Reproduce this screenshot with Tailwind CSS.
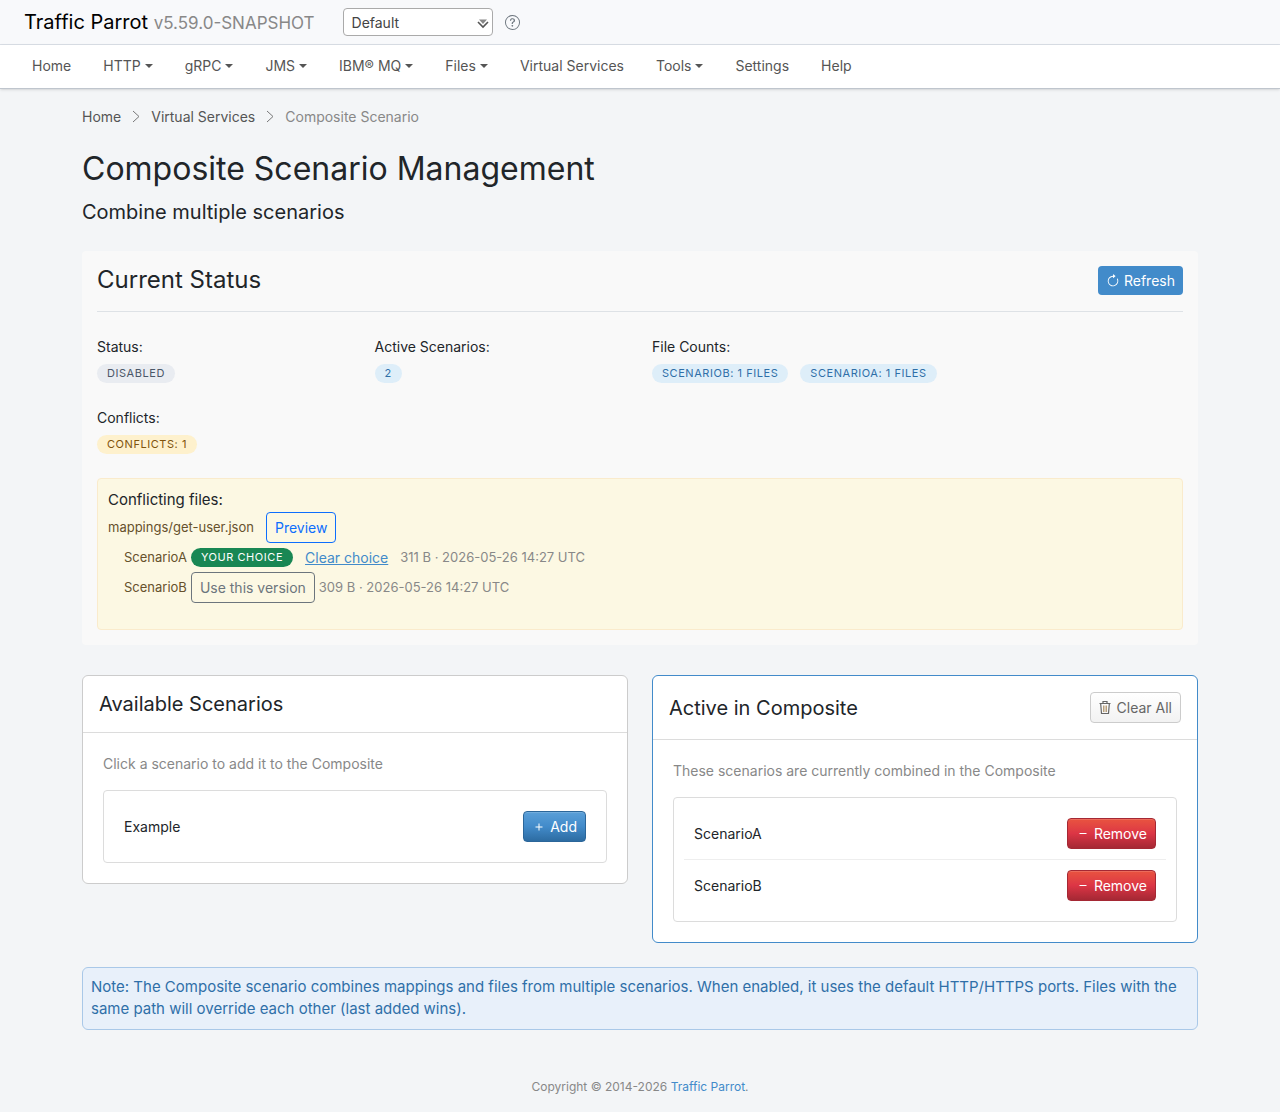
<!DOCTYPE html>
<html lang="en">
<head>
    <meta charset="UTF-8">
    <meta name="viewport" content="width=device-width, initial-scale=1.0">
    <title>Composite Scenario Management - Traffic Parrot</title>
    <script src="https://cdn.jsdelivr.net/npm/@tailwindcss/browser@4"></script>
</head>
<body class="min-h-screen bg-[#f3f5f7] font-['Inter',sans-serif] text-sm text-[#212529]">
    <header class="flex h-[45px] items-center border-b border-[#dadfe6] bg-[#f8f9fb] px-6">
        <a href="#" class="text-[20px] leading-6 text-black">Traffic Parrot <span class="text-[17px] text-[#888]">v5.59.0-SNAPSHOT</span></a>
        <div class="relative ml-7">
            <select id="scenario" aria-label="Scenario" class="block h-7 w-[150px] appearance-none rounded border border-[#aaa] bg-white px-2 pt-0.5 text-sm text-[#444]">
                <option>Default</option>
                <option>Composite</option>
            </select>
            <svg class="pointer-events-none absolute right-1 top-2.5 h-3 w-3" viewBox="0 0 12 12">
                <path d="M2 1.5h8L6 6z" fill="#888"/>
                <path d="M1 4l5 5 5-5" fill="none" stroke="#555" stroke-width="1.6"/>
            </svg>
        </div>
        <button type="button" aria-label="Help" class="ml-3 text-[#6c757d]">
            <svg class="h-[15px] w-[15px]" viewBox="0 0 16 16" fill="currentColor">
                <path d="M8 15A7 7 0 1 1 8 1a7 7 0 0 1 0 14m0 1A8 8 0 1 0 8 0a8 8 0 0 0 0 16"/>
                <path d="M5.255 5.786a.237.237 0 0 0 .241.247h.825c.138 0 .248-.113.266-.25.09-.656.54-1.134 1.342-1.134.686 0 1.314.343 1.314 1.168 0 .635-.374.927-.965 1.371-.673.489-1.206 1.06-1.168 1.987l.003.217a.25.25 0 0 0 .25.246h.811a.25.25 0 0 0 .25-.25v-.105c0-.718.273-.927 1.01-1.486.609-.463 1.244-.977 1.244-2.056 0-1.511-1.276-2.241-2.673-2.241-1.267 0-2.655.59-2.75 2.286m1.557 5.763c0 .533.425.927 1.01.927.609 0 1.028-.394 1.028-.927 0-.552-.42-.94-1.029-.94-.584 0-1.009.388-1.009.94"/>
            </svg>
        </button>
    </header>

    <nav class="flex h-11 items-center gap-8 border-b border-[#bfc5cd] bg-white px-8 pb-0.5 text-[#555] shadow-sm">
        <a href="#">Home</a>
        <a href="#" class="flex items-center gap-1">HTTP <span class="border-x-4 border-t-4 border-x-transparent border-t-[#555]"></span></a>
        <a href="#" class="flex items-center gap-1">gRPC <span class="border-x-4 border-t-4 border-x-transparent border-t-[#555]"></span></a>
        <a href="#" class="flex items-center gap-1">JMS <span class="border-x-4 border-t-4 border-x-transparent border-t-[#555]"></span></a>
        <a href="#" class="flex items-center gap-1">IBM® MQ <span class="border-x-4 border-t-4 border-x-transparent border-t-[#555]"></span></a>
        <a href="#" class="flex items-center gap-1">Files <span class="border-x-4 border-t-4 border-x-transparent border-t-[#555]"></span></a>
        <a href="#">Virtual Services</a>
        <a href="#" class="flex items-center gap-1">Tools <span class="border-x-4 border-t-4 border-x-transparent border-t-[#555]"></span></a>
        <a href="#">Settings</a>
        <a href="#">Help</a>
    </nav>

    <main class="mx-auto max-w-[1140px] px-3 pt-[18px]">
        <nav aria-label="Breadcrumb" class="flex items-center gap-2.5 text-[#555]">
            <a href="#">Home</a>
            <svg class="h-3.5 w-2.5" viewBox="0 0 10 14" fill="none" stroke="#777"><path d="M2 1l6 5.500-6 5.500"/></svg>
            <a href="#">Virtual Services</a>
            <svg class="h-3.5 w-2.5" viewBox="0 0 10 14" fill="none" stroke="#777"><path d="M2 1l6 5.500-6 5.500"/></svg>
            <span class="text-[#888]">Composite Scenario</span>
        </nav>

        <h1 class="mt-[23px] text-[32px] leading-[38px]">Composite Scenario Management</h1>
        <h2 class="mt-3 text-[20px] leading-6">Combine multiple scenarios</h2>

        <section class="mt-[27px] rounded bg-[#f9f9f9] p-[15px]">
            <div class="flex items-start justify-between border-b border-[#dee2e6] pb-4">
                <h3 class="text-[24px] leading-7">Current Status</h3>
                <button type="button" class="flex h-[29px] items-center gap-1 rounded bg-[#428bca] px-2 text-white">
                    <svg class="h-3.5 w-3.5" viewBox="0 0 16 16" fill="currentColor">
                        <path fill-rule="evenodd" d="M8 3a5 5 0 1 0 4.546 2.914.5.5 0 0 1 .908-.417A6 6 0 1 1 8 2z"/>
                        <path d="M8 4.466V.534a.25.25 0 0 1 .41-.192l2.36 1.966c.12.1.12.284 0 .384L8.41 4.658A.25.25 0 0 1 8 4.466"/>
                    </svg>
                    Refresh
                </button>
            </div>

            <div class="mt-6 grid grid-cols-4 gap-6">
                <div>
                    <div class="leading-[22px]">Status:</div>
                    <div class="mt-[6px] flex"><span class="rounded-full bg-[#e9ecf1] px-2.5 text-[11px] leading-[19px] tracking-wider text-[#4b5768]">DISABLED</span></div>
                </div>
                <div>
                    <div class="leading-[22px]">Active Scenarios:</div>
                    <div class="mt-[6px] flex"><span class="rounded-full bg-[#deeef9] px-2.5 text-[11px] leading-[19px] tracking-wider text-[#2f6fa8]">2</span></div>
                </div>
                <div class="col-span-2">
                    <div class="leading-[22px]">File Counts:</div>
                    <div class="mt-[6px] flex gap-3">
                        <span class="rounded-full bg-[#deeef9] px-2.5 text-[11px] leading-[19px] tracking-wider text-[#2f6fa8]">SCENARIOB: 1 FILES</span>
                        <span class="rounded-full bg-[#deeef9] px-2.5 text-[11px] leading-[19px] tracking-wider text-[#2f6fa8]">SCENARIOA: 1 FILES</span>
                    </div>
                </div>
                <div>
                    <div class="leading-[22px]">Conflicts:</div>
                    <div class="mt-[6px] flex"><span class="rounded-full bg-[#fef1cd] px-2.5 text-[11px] leading-[19px] tracking-wider text-[#7f530b]">CONFLICTS: 1</span></div>
                </div>
            </div>

            <div class="mt-6 rounded border border-[#faebcc] bg-[#fcf8e3] px-2.5 pt-2.5 pb-[26px] text-[13px] text-[#66512c]">
                <div class="text-[15px] leading-[22px] text-[#212529]">Conflicting files:</div>
                <div class="mt-px flex h-[31px] items-center gap-3">
                    <span>mappings/get-user.json</span>
                    <button type="button" class="h-[31px] rounded border border-[#0d6efd] px-2 text-sm text-[#0d6efd]">Preview</button>
                </div>
                <ul class="pl-4">
                    <li class="flex h-[29px] items-center">
                        <span>ScenarioA</span>
                        <span class="ml-1 rounded-full bg-[#198754] px-2.5 text-[11px] leading-[19px] tracking-wider text-white">YOUR CHOICE</span>
                        <button type="button" class="ml-3 text-sm text-[#428bca] underline">Clear choice</button>
                        <span class="ml-3 text-[#888]">311 B · 2026-05-26 14:27 UTC</span>
                    </li>
                    <li class="flex h-[31px] items-center gap-1">
                        <span>ScenarioB</span>
                        <button type="button" class="h-[31px] rounded border border-[#6c757d] px-2 text-sm text-[#6c757d]">Use this version</button>
                        <span class="text-[#888]">309 B · 2026-05-26 14:27 UTC</span>
                    </li>
                </ul>
            </div>
        </section>

        <div class="mt-[30px] grid grid-cols-2 items-start gap-6">
            <section class="rounded-md border border-[#ccc] bg-white">
                <div class="border-b border-[#dcdcdc] p-4">
                    <h3 class="text-[20px] leading-6">Available Scenarios</h3>
                </div>
                <div class="p-5">
                    <p class="leading-[22px] text-[#888]">Click a scenario to add it to the Composite</p>
                    <ul class="mt-[15px] rounded border border-[#dcdcdc] p-2.5">
                        <li class="flex items-center justify-between p-2.5">
                            <span>Example</span>
                            <button type="button" class="flex h-[31px] items-center gap-1 rounded border border-[#2b669a] bg-linear-to-b from-[#5a9fd8] via-[#428bca] to-[#2d6ca2] px-2 text-white inset-shadow-[0_1px_0_#ffffff26]">
                                <svg class="h-3.5 w-3.5" viewBox="0 0 14 14" fill="none" stroke="currentColor"><path d="M7 3.5v7M3.5 7h7"/></svg>
                                Add
                            </button>
                        </li>
                    </ul>
                </div>
            </section>

            <section class="rounded-md border border-[#428bca] bg-white">
                <div class="flex items-center justify-between border-b border-[#dcdcdc] p-4">
                    <h3 class="text-[20px] leading-6">Active in Composite</h3>
                    <button type="button" class="flex h-[31px] items-center gap-1 rounded border border-[#ccc] bg-linear-to-b from-white to-[#f2f2f2] px-2 text-[#666]">
                        <svg class="h-3.5 w-3.5" viewBox="0 0 14 14" fill="none" stroke="#666">
                            <path d="M.5 2.500h11M4 2V.500h4V2M1.700 3l.8 9.500h7l.8-9.500" stroke-width="1.200"/>
                            <path d="M4.500 4.500v6.500M6 4.500v6.500M7.500 4.500v6.500" stroke="#a8895c" stroke-width=".8"/>
                        </svg>
                        Clear All
                    </button>
                </div>
                <div class="p-5">
                    <p class="leading-[22px] text-[#888]">These scenarios are currently combined in the Composite</p>
                    <ul class="mt-[15px] divide-y divide-[#eee] rounded border border-[#dcdcdc] p-2.5">
                        <li class="flex items-center justify-between p-2.5">
                            <span>ScenarioA</span>
                            <button type="button" class="flex h-[31px] items-center gap-1 rounded border border-[#a52834] bg-linear-to-b from-[#e9533f] via-[#dc3545] to-[#a52834] px-2 text-white inset-shadow-[0_1px_0_#ffffff26]">
                                <svg class="h-3.5 w-3.5" viewBox="0 0 14 14" fill="none" stroke="currentColor"><path d="M3.500 6.500h7"/></svg>
                                Remove
                            </button>
                        </li>
                        <li class="flex items-center justify-between p-2.5">
                            <span>ScenarioB</span>
                            <button type="button" class="flex h-[31px] items-center gap-1 rounded border border-[#a52834] bg-linear-to-b from-[#e9533f] via-[#dc3545] to-[#a52834] px-2 text-white inset-shadow-[0_1px_0_#ffffff26]">
                                <svg class="h-3.5 w-3.5" viewBox="0 0 14 14" fill="none" stroke="currentColor"><path d="M3.500 6.500h7"/></svg>
                                Remove
                            </button>
                        </li>
                    </ul>
                </div>
            </section>
        </div>

        <div class="mt-6 rounded-md border border-[#a9c8e8] bg-[#e8f0fa] px-2 pt-2 pb-[9px] text-[15px] leading-[22px] text-[#2f6fa8]">
            Note: The Composite scenario combines mappings and files from multiple scenarios. When enabled, it uses the default HTTP/HTTPS ports. Files with the same path will override each other (last added wins).
        </div>
    </main>

    <footer class="mt-12 pb-4 text-center text-xs leading-[18px] text-[#888]">
        Copyright © 2014-2026 <a href="#" class="text-[#428bca]">Traffic Parrot</a>.
    </footer>
</body>
</html>
